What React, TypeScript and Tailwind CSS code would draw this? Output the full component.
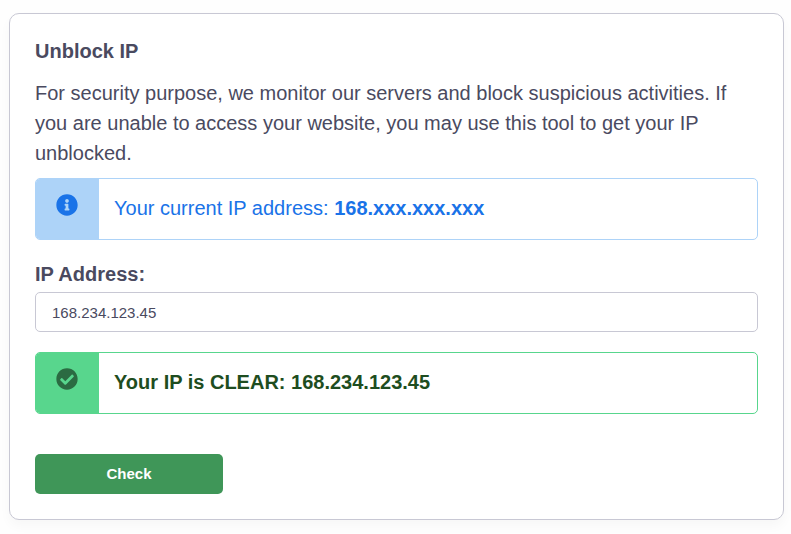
function InfoIcon() {
  return (
    <svg viewBox="0 0 512 512" className="w-[22px] h-[22px] fill-[#1a73e8]">
      <path d="M256 8C119 8 8 119 8 256s111 248 248 248 248-111 248-248S393 8 256 8zm0 110c23.2 0 42 18.8 42 42s-18.8 42-42 42-42-18.8-42-42 18.8-42 42-42zm56 254c0 6.6-5.4 12-12 12h-88c-6.6 0-12-5.4-12-12v-24c0-6.6 5.4-12 12-12h12v-64h-12c-6.6 0-12-5.4-12-12v-24c0-6.6 5.4-12 12-12h64c6.6 0 12 5.4 12 12v100h12c6.6 0 12 5.4 12 12v24z" />
    </svg>
  );
}

function CheckIcon() {
  return (
    <svg viewBox="0 0 512 512" className="w-[22px] h-[22px] fill-[#2b6b42]">
      <path d="M504 256c0 137-111 248-248 248S8 393 8 256 119 8 256 8s248 111 248 248zM227.3 387.3l184-184c6.2-6.2 6.2-16.4 0-22.6l-22.6-22.6c-6.2-6.2-16.4-6.2-22.6 0L216 308.1l-70.1-70.1c-6.2-6.2-16.4-6.2-22.6 0l-22.6 22.6c-6.2 6.2-6.2 16.4 0 22.6l104 104c6.2 6.2 16.4 6.2 22.6 0z" />
    </svg>
  );
}

export default function App() {
  return (
    <div className="w-[791px] h-[534px] bg-[#fefefe] pt-[13px] px-[9px] font-['Liberation_Sans',Arial,sans-serif] text-[#4a4a5f]">
      <div className="w-[775px] h-[507px] bg-white border border-[#c8c8d4] rounded-[10px] shadow-[0_6px_12px_rgba(0,0,0,0.03)] pt-[25px] px-[25px]">
        <h2 className="text-xl font-bold leading-[24px]">Unblock IP</h2>
        <p className="mt-[15px] text-xl leading-[30px]">
          For security purpose, we monitor our servers and block suspicious activities. If you are unable to access your website, you may use this tool to get your IP unblocked.
        </p>

        <div className="mt-[10px] h-[62px] flex border border-[#add3f8] rounded-[5px] overflow-hidden">
          <div className="w-[63px] bg-[#add3f8] flex justify-center pt-[15px] pr-[1px]">
            <InfoIcon />
          </div>
          <div className="pl-[15px] pb-[2px] flex items-center text-xl text-[#1a73e8]">
            <span>Your current IP address: <b>168.xxx.xxx.xxx</b></span>
          </div>
        </div>

        <label className="block mt-[22px] text-xl font-bold leading-[24px]">IP Address:</label>
        <input
          readOnly
          value="168.234.123.45"
          className="block mt-[6px] w-full h-[40px] px-[16px] bg-white border border-[#c8c8d4] rounded-[5px] text-[15px] text-[#4a4a5f] outline-none"
        />

        <div className="mt-[20px] h-[62px] flex border border-[#58d68d] rounded-[5px] overflow-hidden">
          <div className="w-[63px] bg-[#58d68d] flex justify-center pt-[15px] pr-[1px]">
            <CheckIcon />
          </div>
          <div className="pl-[15px] pb-[2px] flex items-center text-xl font-bold text-[#1e4d20]">
            Your IP is CLEAR: 168.234.123.45
          </div>
        </div>

        <button className="block mt-[40px] w-[188px] h-[40px] bg-[#3f9658] rounded-[5px] text-white text-[15px] font-bold">
          Check
        </button>
      </div>
    </div>
  );
}
